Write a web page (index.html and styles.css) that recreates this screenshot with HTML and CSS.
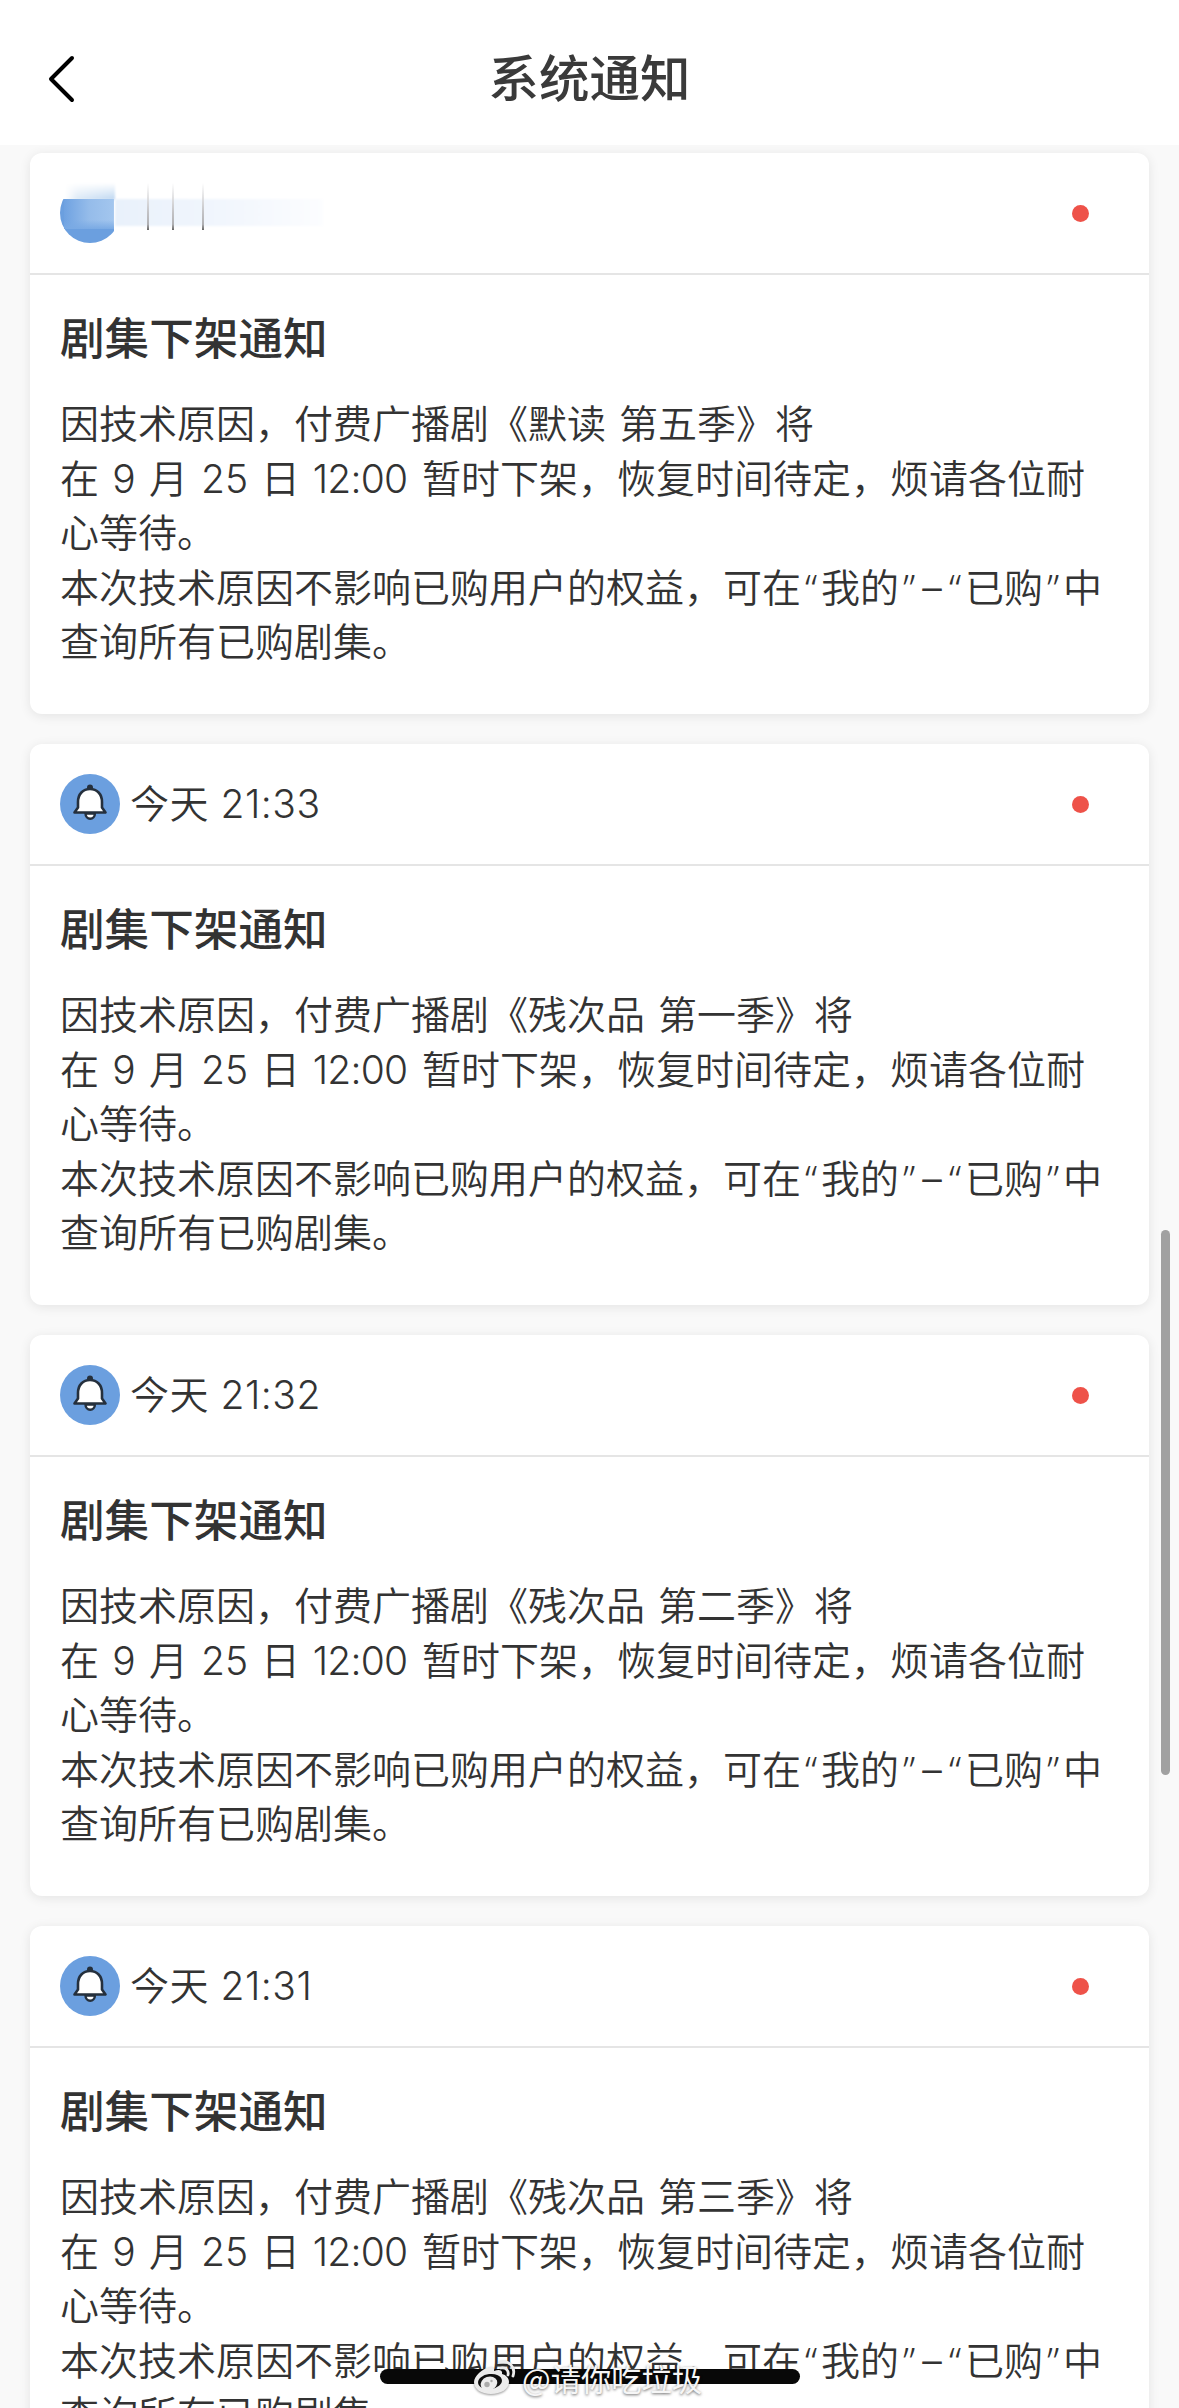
FILE: index.html
```html
<!DOCTYPE html>
<html lang="zh-CN">
<head>
  <meta charset="utf-8">
  <title>系统通知</title>
  <link rel="stylesheet" href="styles.css">
</head>
<body>
  <svg class="defs" width="0" height="0">
    <symbol id="bell" viewBox="0 0 60 60">
      <circle cx="30" cy="30" r="30" fill="#6b9fdf"/>
      <circle cx="30" cy="13.500" r="3" fill="#25303d"/>
      <path d="M25.500 39.500a4.700 5.300 0 0 0 9.400 0z" fill="#fff" stroke="#25303d" stroke-width="2.400"/>
      <path d="M18 28c0-8 5-13 12-13s12 5 12 13v5.500l3.500 5h-31l3.500-5z" fill="#fff" stroke="#25303d" stroke-width="2.600" stroke-linejoin="round"/>
    </symbol>
  </svg>

  <header class="navbar">
    <svg class="back" viewBox="0 0 30 50"><path d="M26 4L5 25l21 21" fill="none" stroke="#000" stroke-width="4" stroke-linecap="round" stroke-linejoin="round"/></svg>
    <h1>系统通知</h1>
  </header>

  <main class="list">
    <section class="card">
      <div class="card-head">
        <div class="smudge">
          <i class="smudge-top"></i>
          <i class="smudge-disc"></i>
          <i class="smudge-mid"></i>
          <i class="smudge-trail"></i>
          <i class="streak streak-a"></i>
          <i class="streak streak-b"></i>
          <i class="streak streak-c"></i>
        </div>
        <span class="dot"></span>
      </div>
      <div class="card-body">
        <h2>剧集下架通知</h2>
        <p>因技术原因，付费广播剧《默读 第五季》将<br>在<span class="n1">9</span>月<span class="n2">25</span>日<span class="n3">12:00</span>暂时下架，恢复时间待定，烦请各位耐<br>心等待。<br>本次技术原因不影响已购用户的权益，可在<span class="q">“</span>我的<span class="q">”</span><span class="dash">–</span><span class="q">“</span>已购<span class="q">”</span>中<br>查询所有已购剧集。</p>
      </div>
    </section>

    <section class="card">
      <div class="card-head">
        <svg class="bell"><use href="#bell"/></svg>
        <span class="date">今天 21:33</span>
        <span class="dot"></span>
      </div>
      <div class="card-body">
        <h2>剧集下架通知</h2>
        <p>因技术原因，付费广播剧《残次品 第一季》将<br>在<span class="n1">9</span>月<span class="n2">25</span>日<span class="n3">12:00</span>暂时下架，恢复时间待定，烦请各位耐<br>心等待。<br>本次技术原因不影响已购用户的权益，可在<span class="q">“</span>我的<span class="q">”</span><span class="dash">–</span><span class="q">“</span>已购<span class="q">”</span>中<br>查询所有已购剧集。</p>
      </div>
    </section>

    <section class="card">
      <div class="card-head">
        <svg class="bell"><use href="#bell"/></svg>
        <span class="date">今天 21:32</span>
        <span class="dot"></span>
      </div>
      <div class="card-body">
        <h2>剧集下架通知</h2>
        <p>因技术原因，付费广播剧《残次品 第二季》将<br>在<span class="n1">9</span>月<span class="n2">25</span>日<span class="n3">12:00</span>暂时下架，恢复时间待定，烦请各位耐<br>心等待。<br>本次技术原因不影响已购用户的权益，可在<span class="q">“</span>我的<span class="q">”</span><span class="dash">–</span><span class="q">“</span>已购<span class="q">”</span>中<br>查询所有已购剧集。</p>
      </div>
    </section>

    <section class="card">
      <div class="card-head">
        <svg class="bell"><use href="#bell"/></svg>
        <span class="date">今天 21:31</span>
        <span class="dot"></span>
      </div>
      <div class="card-body">
        <h2>剧集下架通知</h2>
        <p>因技术原因，付费广播剧《残次品 第三季》将<br>在<span class="n1">9</span>月<span class="n2">25</span>日<span class="n3">12:00</span>暂时下架，恢复时间待定，烦请各位耐<br>心等待。<br>本次技术原因不影响已购用户的权益，可在<span class="q">“</span>我的<span class="q">”</span><span class="dash">–</span><span class="q">“</span>已购<span class="q">”</span>中<br>查询所有已购剧集。</p>
      </div>
    </section>
  </main>

  <div class="scrollbar"></div>
  <div class="home-bar"></div>
  <div class="watermark">
    <svg class="weibo" viewBox="0 0 44 36">
      <path d="M17 7c3-1 5 1 4 4 5-2 9-1 8 3 4 1 7 4 7 8 0 7-8 12-18 12S1 29 1 22C1 16 9 9 17 7z" fill="#ececec"/>
      <ellipse cx="17" cy="21.500" rx="12" ry="7.500" fill="#111" transform="rotate(-7 17 21.500)"/>
      <ellipse cx="16" cy="23.500" rx="8.500" ry="6.800" fill="#ececec" transform="rotate(-20 16 23.500)"/>
      <circle cx="14" cy="24.500" r="2.700" fill="#aaa"/>
      <circle cx="18.500" cy="21" r="1.200" fill="#aaa"/>
      <path d="M27 2c9-2 16 5 13 14M28 8c5-1 8 3 7 7" fill="none" stroke="#ececec" stroke-width="2.800" stroke-linecap="round"/>
    </svg>
    <span>@请你吃垃圾</span>
  </div>
</body>
</html>
```
FILE: styles.css
```css
* { box-sizing: border-box; }
body { margin: 0; height: 2408px; overflow: hidden; position: relative; background: #f9f9f9; color: #333; font-family: Inter, "Noto Sans CJK SC", sans-serif; }
.defs { position: absolute; }

.navbar { height: 145px; padding-top: 12px; background: #fff; display: grid; grid-template-columns: 120px 1fr 120px; align-items: center; }
.navbar h1 { margin: 0; font-size: 50.5px; line-height: 60px; font-weight: 500; text-align: center; color: #3a3a3a; }
.back { width: 30px; height: 50px; margin-left: 46px; }

.list { padding: 8px 30px 0; display: flex; flex-direction: column; gap: 30px; height: 2263px; overflow: hidden; }
.card { flex: none; height: 561px; background: #fff; border-radius: 12px; box-shadow: 0 2px 12px rgba(0, 0, 0, .09); }
.card-head { height: 122px; padding: 0 60px 0 30px; display: flex; align-items: center; border-bottom: 2px solid #e5e5e5; }
.bell { width: 60px; height: 60px; }
.date { margin-left: 10px; font-size: 39px; line-height: 56px; font-weight: 350; letter-spacing: .5px; white-space: pre; }
.dot { width: 17px; height: 17px; margin-left: auto; border-radius: 50%; background: #ee5249; }
.card-body { padding: 32px 30px 0; }
.card-body h2 { margin: 0 0 26px; font-size: 44.6px; line-height: 64px; font-weight: 500; }
.card-body p { margin: 0; font-size: 39px; line-height: 54.6px; font-weight: 350; word-spacing: 2px; white-space: nowrap; }
.n1, .n2, .n3, .dash, .q { display: inline-block; text-align: center; }
.n1 { width: 50px; }
.n2 { width: 73px; }
.n3 { width: 122px; padding-right: 2px; letter-spacing: -.8px; }
.dash { width: 26px; }
.q { width: 20px; height: 54px; vertical-align: top; font-family: "Noto Sans", sans-serif; }

/* smeared avatar and date */
.smudge { position: relative; width: 270px; height: 60px; }
.smudge i { position: absolute; display: block; }
.smudge-disc { left: 0; top: 0; width: 60px; height: 60px; border-radius: 50%; background: #6b9fdf; clip-path: inset(16px 6px 0 0); }
.smudge-top { left: 5px; top: 0; width: 50px; height: 17px; background: linear-gradient(#fff, #fff0), linear-gradient(90deg, #fff, #dce9f6 25%, #bcd6f1); filter: blur(1px); }
.smudge-mid { left: 4px; top: 16px; width: 50px; height: 30px; background: linear-gradient(#fff0 70%, #7aaae4), linear-gradient(90deg, #6fa2e1, #95bcea 50%, #a3c6ee); }
.smudge-trail { left: 55px; top: 16px; width: 208px; height: 27px; background: linear-gradient(90deg, #e9f1fb, #f1f6fd 50%, #fcfdff); filter: blur(1px); }
.streak { top: 0; width: 2px; height: 47px; background: linear-gradient(#fff, #c5c5c8 60%, #b0b0b3 88%, #666); }
.streak-a { left: 87px; }
.streak-b { left: 112px; }
.streak-c { left: 142px; }

.scrollbar { position: absolute; left: 1161px; top: 1230px; width: 9px; height: 545px; border-radius: 5px; background: #a1a1a1; }
.home-bar { position: absolute; left: 380px; top: 2369px; width: 420px; height: 15px; border-radius: 8px; background: #080808; }
.watermark { position: absolute; left: 473px; top: 2360px; display: flex; align-items: center; height: 36px; font-family: "Noto Sans CJK SC", sans-serif; font-size: 30.3px; color: #f6f6f6; text-shadow: 0 1px 3px rgba(0, 0, 0, .6); white-space: nowrap; }
.weibo { width: 44px; height: 36px; margin-right: 5px; filter: drop-shadow(0 1px 1px rgba(0, 0, 0, .4)); }
```
